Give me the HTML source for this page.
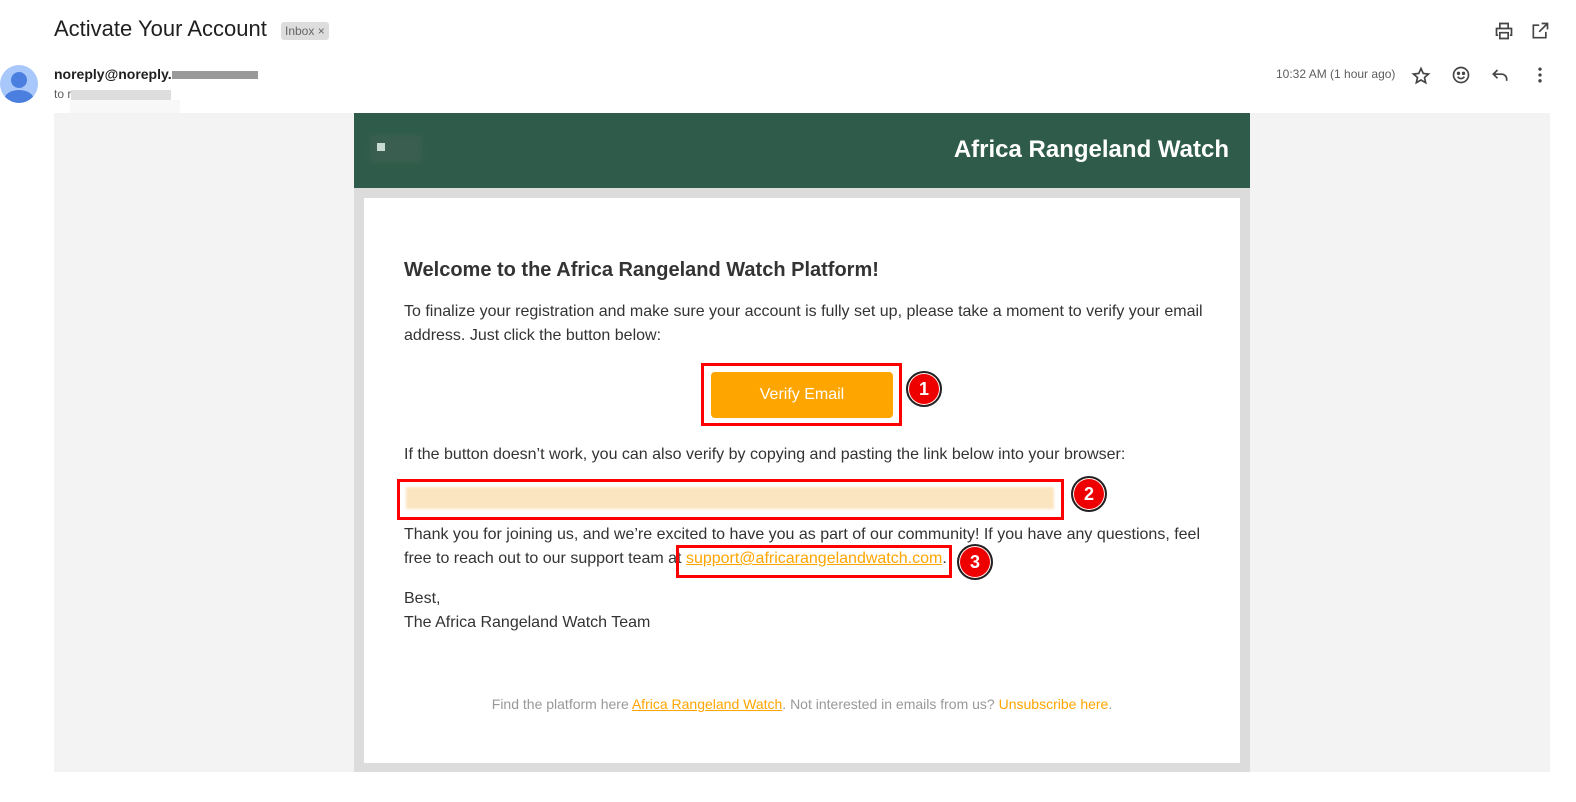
<!DOCTYPE html>
<html><head><meta charset="utf-8"><style>
*{margin:0;padding:0;box-sizing:border-box}
body{width:1576px;height:802px;background:#fff;font-family:"Liberation Sans",Arial,sans-serif;position:relative;overflow:hidden;color:#333}
.abs{position:absolute}
.title{left:54px;top:16px;font-size:22px;color:#1f1f1f}
.tag{left:281px;top:22px;background:#ddd;color:#666;font-size:12px;padding:2px 4px;border-radius:3px;height:18px;line-height:14px}
.av{left:0;top:65px;width:38px;height:38px;border-radius:50%;background:#a8c7fa;overflow:hidden}
.from{left:54px;top:66px;font-size:14px;font-weight:bold;color:#1f1f1f}
.to{left:54px;top:87px;font-size:12px;color:#5e5e5e}
.time{left:1276px;top:67px;font-size:12px;color:#5e5e5e}
.outer{left:54px;top:113px;width:1496px;height:659px;background:#f3f3f3}
.email{left:354px;top:113px;width:896px;height:659px;background:#dcdcdc}
.hdr{left:354px;top:113px;width:896px;height:75px;background:#2f5c4a}
.brand{right:347px;top:136px;font-size:24px;font-weight:bold;color:#fff}
.inner{left:364px;top:198px;width:876px;height:565px;background:#fff}
p.t{position:absolute;left:404px;font-size:16px;line-height:24px;color:#333}
.btn{left:711px;top:372px;width:182px;height:46px;background:#ffa500;border-radius:4px;color:#fff;font-size:16px;text-align:center;line-height:46px}
.red{position:absolute;border:3px solid #f00}
.num{position:absolute;width:36px;height:36px;border-radius:50%;background:#e00;border:2px solid #222;box-shadow:0 0 0 1px #fff inset;color:#fff;font-weight:bold;font-size:18px;text-align:center;line-height:32px}
a{color:#ffa500;text-decoration:underline}
.foot{left:364px;width:876px;top:696px;text-align:center;font-size:14px;color:#999}
</style></head><body>
<div class="abs title">Activate Your Account</div>
<div class="abs tag">Inbox ×</div>
<div class="abs av"><div class="abs" style="left:11px;top:7px;width:16px;height:16px;border-radius:50%;background:#4a7fe0"></div><div class="abs" style="left:4px;top:25px;width:30px;height:20px;border-radius:50%;background:#4a7fe0"></div></div>
<div class="abs from">noreply@noreply.<span style="display:inline-block;width:86px;height:8px;background:#999;vertical-align:middle"></span></div>
<div class="abs to">to r<span style="display:inline-block;width:100px;height:10px;background:#ddd;vertical-align:middle"></span></div>
<div class="abs" style="left:70px;top:100px;width:110px;height:14px;background:#f8f8f8"></div>
<div class="abs time">10:32 AM (1 hour ago)</div>
<svg class="abs" style="left:1494px;top:21px" width="20" height="20" viewBox="0 0 24 24" fill="none" stroke="#444" stroke-width="2"><path d="M7 8V3h10v5M5 17H3V9h18v8h-2M7 14h10v7H7z"/></svg>
<svg class="abs" style="left:1530px;top:21px" width="20" height="20" viewBox="0 0 24 24" fill="none" stroke="#444" stroke-width="2"><path d="M19 13v7H4V5h7M14 3h7v7M21 3l-10 10"/></svg>
<svg class="abs" style="left:1411px;top:66px" width="20" height="20" viewBox="0 0 24 24" fill="none" stroke="#444" stroke-width="2"><path d="M12 3l2.7 6 6.3.6-4.8 4.2 1.4 6.2L12 16.8 6.4 20l1.4-6.2L3 9.6 9.3 9z"/></svg>
<svg class="abs" style="left:1451px;top:65px" width="20" height="20" viewBox="0 0 24 24" fill="none" stroke="#444" stroke-width="2"><circle cx="12" cy="12" r="9"/><path d="M8 14c2 3 6 3 8 0"/><circle cx="9" cy="10" r="1" fill="#444"/><circle cx="15" cy="10" r="1" fill="#444"/></svg>
<svg class="abs" style="left:1490px;top:65px" width="20" height="20" viewBox="0 0 24 24" fill="none" stroke="#444" stroke-width="2"><path d="M9 6L4 11l5 5M4 11h10a6 6 0 016 6v2"/></svg>
<svg class="abs" style="left:1530px;top:65px" width="20" height="20" viewBox="0 0 24 24" fill="#444"><circle cx="12" cy="5" r="2"/><circle cx="12" cy="12" r="2"/><circle cx="12" cy="19" r="2"/></svg>
<div class="abs outer"></div>
<div class="abs email"></div>
<div class="abs hdr"></div>
<div class="abs" style="left:370px;top:135px;width:52px;height:28px;background:#3a5f50;filter:blur(2px)"></div>
<div class="abs" style="left:377px;top:143px;width:8px;height:8px;background:#c8dcd4"></div>
<div class="abs brand">Africa Rangeland Watch</div>
<div class="abs inner"></div>
<p class="t" style="top:258px;font-size:20px;font-weight:bold;line-height:24px">Welcome to the Africa Rangeland Watch Platform!</p>
<p class="t" style="top:300px;width:810px">To finalize your registration and make sure your account is fully set up, please take a moment to verify your email address. Just click the button below:</p>
<div class="red" style="left:701px;top:363px;width:201px;height:63px"></div>
<div class="abs btn">Verify Email</div>
<div class="num" style="left:906px;top:371px">1</div>
<p class="t" style="top:443px">If the button doesn’t work, you can also verify by copying and pasting the link below into your browser:</p>
<div class="red" style="left:397px;top:479px;width:667px;height:41px"></div>
<div class="abs" style="left:406px;top:487px;width:648px;height:22px;background:#fbe5c0;filter:blur(1px)"></div>
<div class="num" style="left:1071px;top:476px">2</div>
<p class="t" style="top:523px;width:810px">Thank you for joining us, and we’re excited to have you as part of our community! If you have any questions, feel free to reach out to our support team at <a>support@africarangelandwatch.com</a>.</p>
<div class="red" style="left:676px;top:545px;width:276px;height:33px"></div>
<div class="num" style="left:957px;top:544px">3</div>
<p class="t" style="top:587px">Best,<br>The Africa Rangeland Watch Team</p>
<div class="abs foot">Find the platform here <a>Africa Rangeland Watch</a>. Not interested in emails from us? <span style="color:#ffa500">Unsubscribe here</span>.</div>
</body></html>
